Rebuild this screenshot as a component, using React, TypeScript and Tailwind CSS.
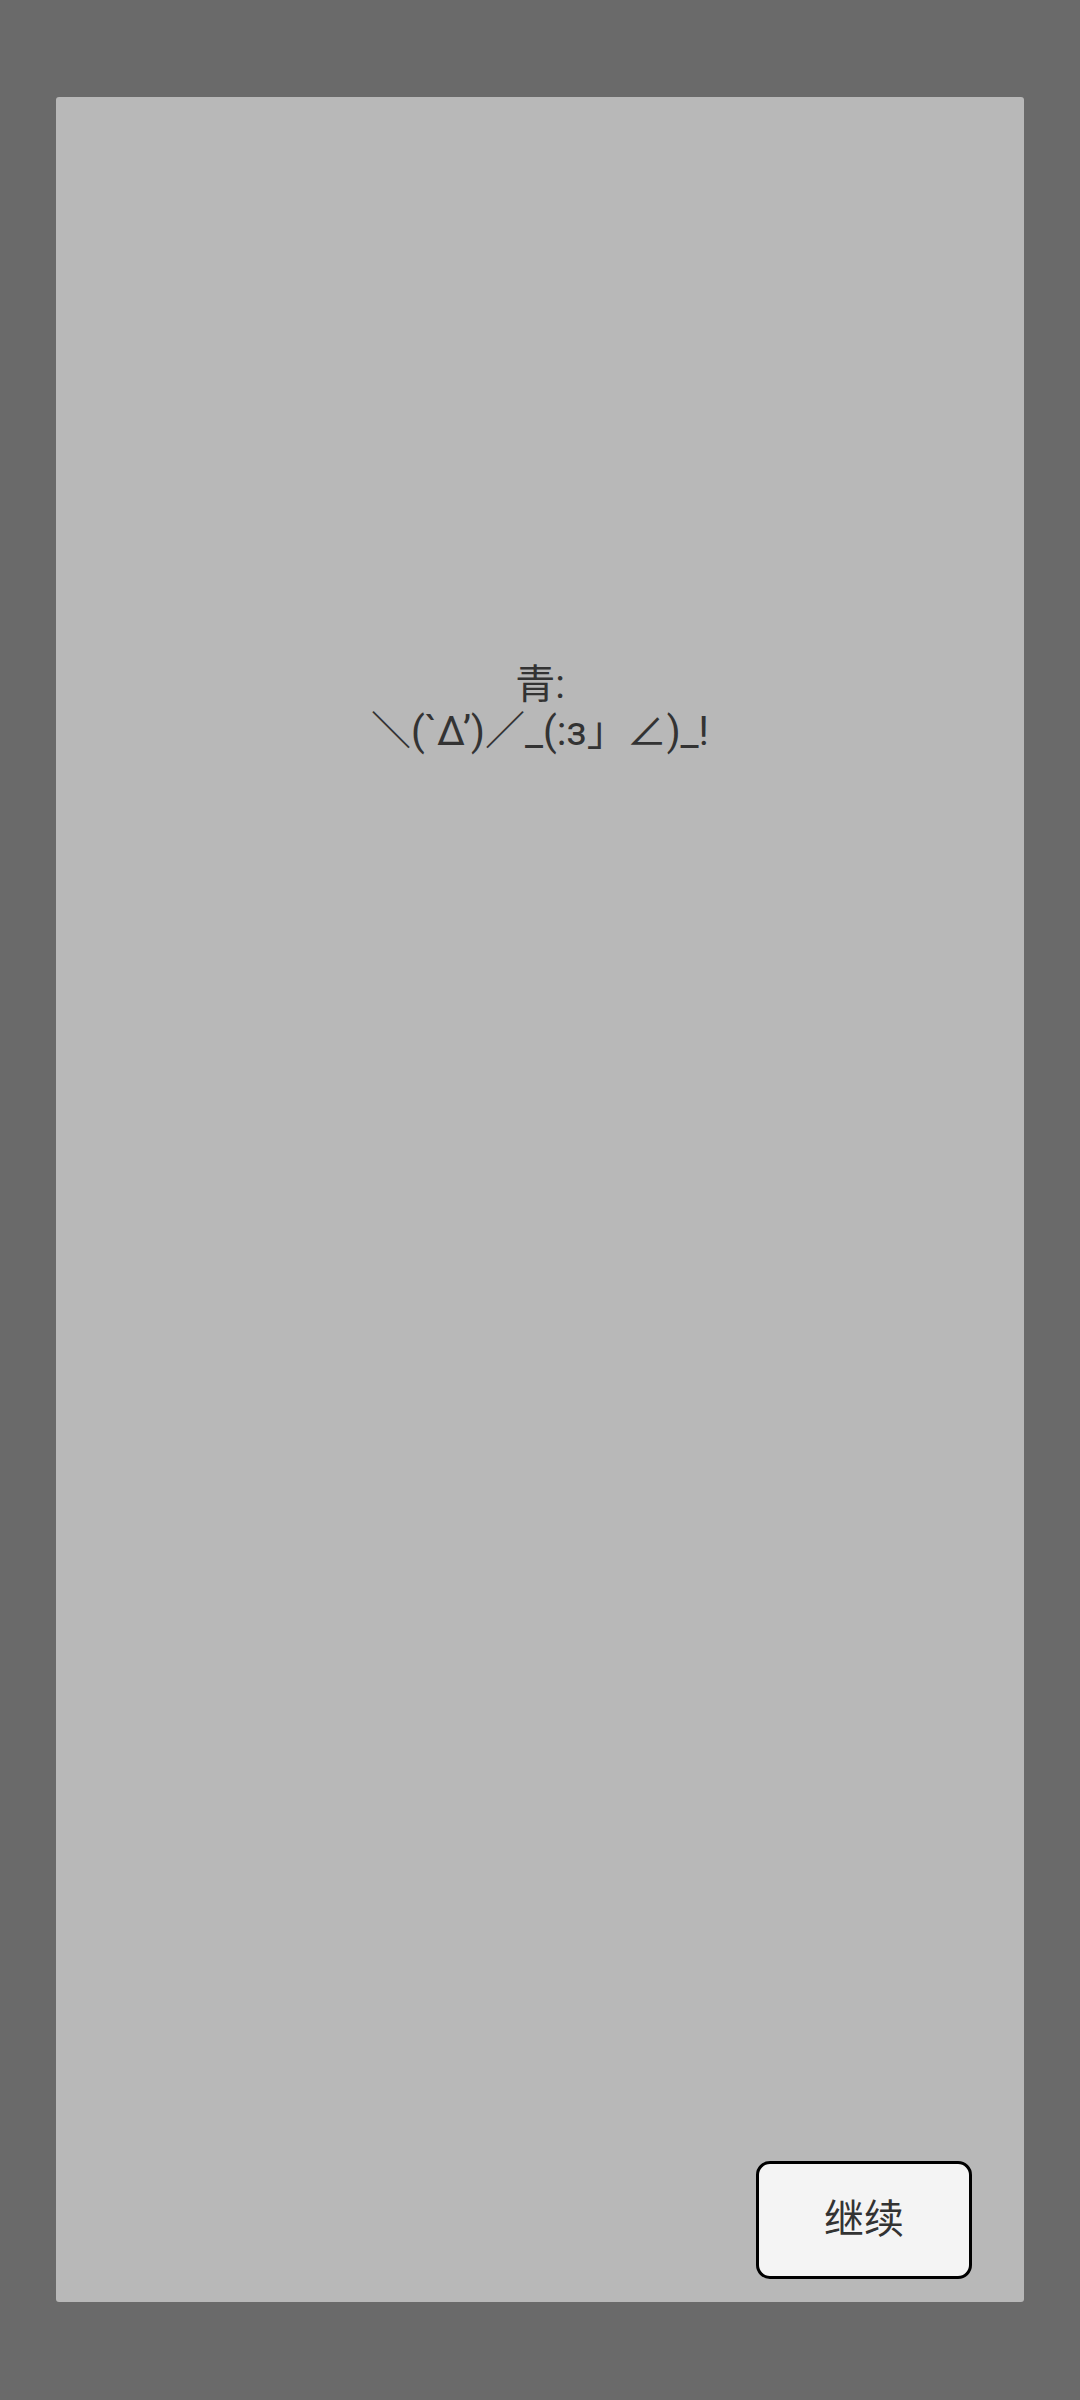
export default function App() {
  return (
    <div
      className="w-[1080px] h-[2400px] bg-[#6a6a6a] px-[56px] pt-[97px] pb-[98px]"
      style={{ fontFamily: 'Roboto, "Noto Sans CJK SC", sans-serif' }}
    >
      <div className="h-full bg-[#b8b8b8] rounded-[3px] flex flex-col">
        <div className="pt-[564px] text-center text-[40px] leading-[47px] text-[#333333]">
          <div>青:</div>
          <div>＼(`Δ’)／_(:з」∠)_!</div>
        </div>
        <div className="flex-1" />
        <div className="flex justify-end pr-[52px] pb-[23px]">
          <button className="w-[216px] h-[118px] rounded-[14px] border-[3px] border-black bg-[#f4f4f4] text-[40px] text-[#333333] flex items-center justify-center">
            继续
          </button>
        </div>
      </div>
    </div>
  );
}
